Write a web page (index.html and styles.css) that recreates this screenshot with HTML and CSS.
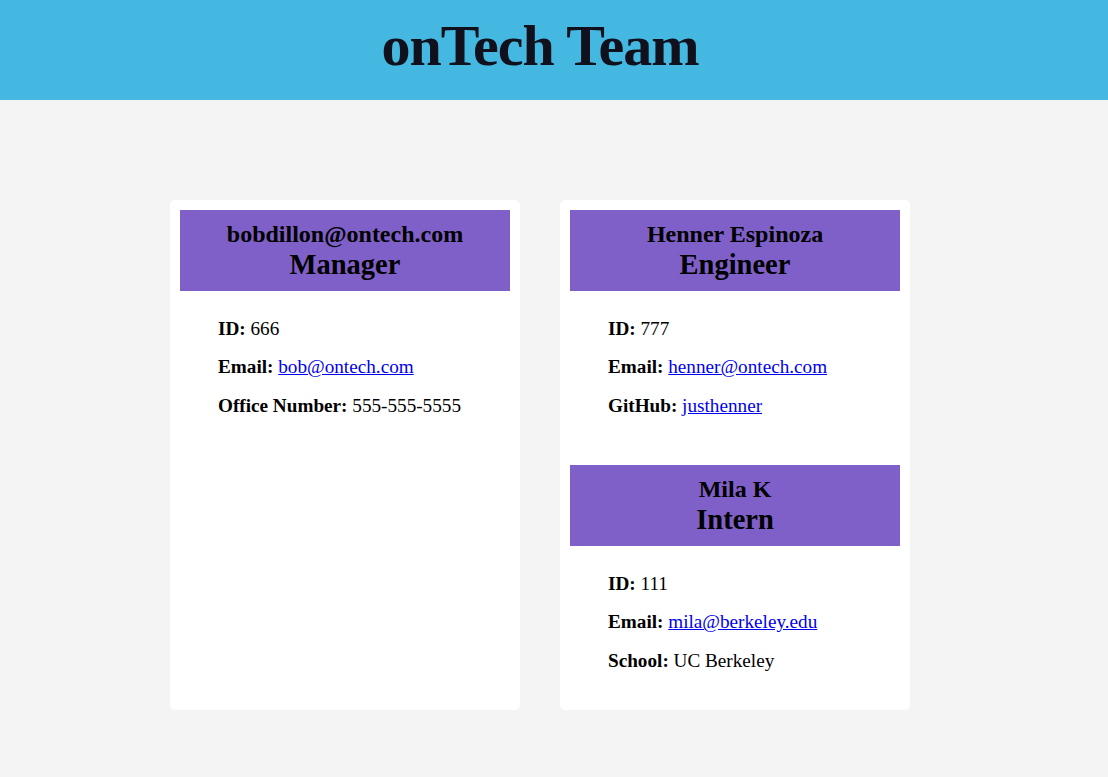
FILE: index.html
```html
<!DOCTYPE html>
<html lang="en">
<head>
<meta charset="utf-8">
<title>onTech Team</title>
<link rel="stylesheet" href="styles.css">
</head>
<body>
<header class="site-header">
  <h1 class="site-title">onTech Team</h1>
</header>
<main class="team">
  <section class="card">
    <div class="employee">
      <div class="employee-head">
        <h2 class="employee-name">bobdillon@ontech.com</h2>
        <h3 class="employee-role">Manager</h3>
      </div>
      <ul class="employee-info">
        <li><b>ID:</b> 666</li>
        <li><b>Email:</b> <a href="#">bob@ontech.com</a></li>
        <li><b>Office Number:</b> 555-555-5555</li>
      </ul>
    </div>
  </section>
  <section class="card">
    <div class="employee">
      <div class="employee-head">
        <h2 class="employee-name">Henner Espinoza</h2>
        <h3 class="employee-role">Engineer</h3>
      </div>
      <ul class="employee-info">
        <li><b>ID:</b> 777</li>
        <li><b>Email:</b> <a href="#">henner@ontech.com</a></li>
        <li><b>GitHub:</b> <a href="#">justhenner</a></li>
      </ul>
    </div>
    <div class="employee">
      <div class="employee-head">
        <h2 class="employee-name">Mila K</h2>
        <h3 class="employee-role">Intern</h3>
      </div>
      <ul class="employee-info">
        <li><b>ID:</b> 111</li>
        <li><b>Email:</b> <a href="#">mila@berkeley.edu</a></li>
        <li><b>School:</b> UC Berkeley</li>
      </ul>
    </div>
  </section>
</main>
</body>
</html>
```
FILE: styles.css
```css
html, body {
  margin: 0;
  padding: 0;
}
body {
  background: #f4f4f4;
  font-family: "Liberation Serif", "Times New Roman", serif;
  color: #000;
  min-height: 777px;
}
.site-header {
  background: #44b8e0;
  height: 100px;
}
.site-title {
  width: 1080px;
  margin: 0;
  text-align: center;
  font-size: 58px;
  letter-spacing: -1px;
  line-height: 91px;
  font-weight: bold;
  color: #10111d;
}
.team {
  width: 1080px;
  display: flex;
  justify-content: center;
  align-items: stretch;
  gap: 40px;
  padding-top: 100px;
}
.card {
  width: 330px;
  background: #fff;
  border-radius: 5px;
  padding: 10px 10px 11px;
  display: flex;
  flex-direction: column;
  gap: 21px;
}
.employee-head {
  background: #7f5fc8;
  padding: 10px 0;
  text-align: center;
}
.employee-name {
  margin: 0;
  font-size: 24px;
  line-height: 28px;
  font-weight: bold;
}
.employee-role {
  margin: 0;
  font-size: 28.5px;
  line-height: 33px;
  font-weight: bold;
}
.employee-info {
  list-style: none;
  font-size: 19.2px;
  margin: 1em 0;
  padding: 0 0 0 38px;
}
.employee-info li {
  line-height: 22px;
  padding: 8.1px 0;
}
.employee-info a {
  color: #0000ee;
}
```
